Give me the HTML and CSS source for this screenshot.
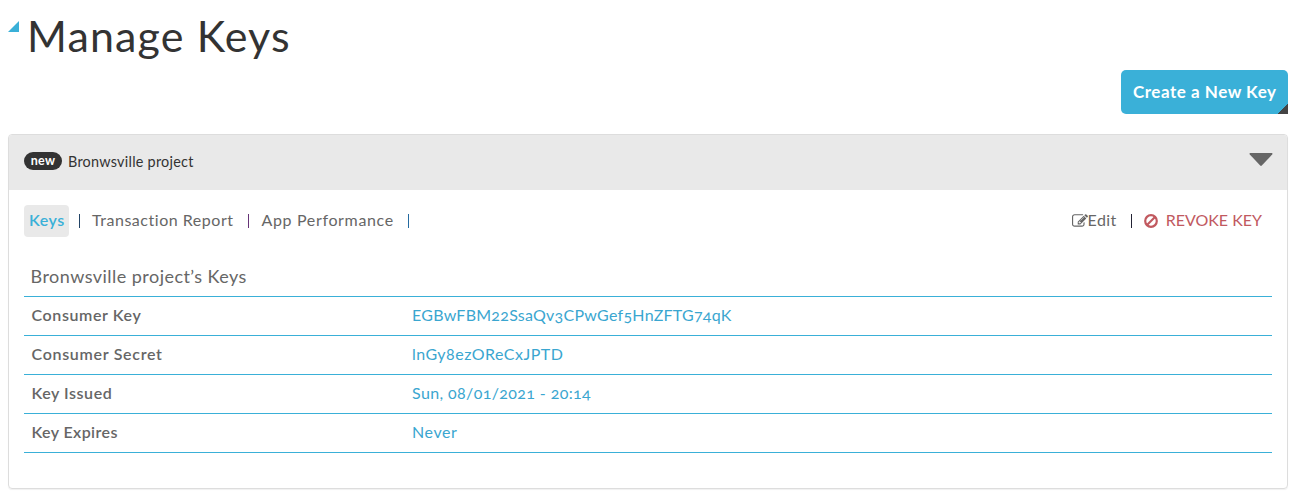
FILE: index.html
```html
<!DOCTYPE html>
<html lang="en">
<head>
<meta charset="utf-8">
<title>Manage Keys</title>
<link rel="stylesheet" href="styles.css">
</head>
<body>
<header class="page-head">
  <svg class="corner-mark" width="11" height="11" viewBox="0 0 11 11"><path d="M11 0V11H0Z"/></svg>
  <h1 class="page-title"><span>Manage Keys</span></h1>
</header>
<div class="actions">
  <a class="create"><span>Create a New Key</span></a>
</div>
<section class="panel">
  <div class="panel-head">
    <span class="badge">new</span>
    <span class="project">Bronwsville project</span>
    <svg class="caret" width="24" height="14" viewBox="0 0 24 14"><path d="M1.200 0H22.800Q24 .4 23.200 1.500L12.800 12.600Q12 13.400 11.200 12.600L.8 1.500Q0 .4 1.200 0Z"/></svg>
  </div>
  <div class="panel-body">
    <nav class="tabs">
      <a class="tab active">Keys</a><i class="sep sep-first"></i>
      <a class="tab report">Transaction Report</a><i class="sep sep-purple"></i>
      <a class="tab perf">App Performance</a><i class="sep sep-blue"></i>
      <span class="tools">
        <svg class="edit-icon" width="16" height="16" viewBox="0 0 1792 1792"><path d="M888 1184l116-116-152-152-116 116v56h96v96h56zm440-720q-16-16-33 1l-350 350q-17 17-1 33t33-1l350-350q17-17 1-33zm80 594v190q0 119-84.500 203.500t-203.500 84.500h-832q-119 0-203.500-84.500t-84.500-203.500v-832q0-119 84.500-203.500t203.500-84.500h832q63 0 117 25 15 7 18 23 3 17-9 29l-49 49q-14 14-32 8-23-6-45-6h-832q-66 0-113 47t-47 113v832q0 66 47 113t113 47h832q66 0 113-47t47-113v-126q0-13 9-22l64-64q15-15 35-7t20 29zm-96-738l288 288-672 672h-288v-288zm444 132l-92 92-288-288 92-92q28-28 68-28t68 28l152 152q28 28 28 68t-28 68z"/></svg>
        <a class="edit">Edit</a><i class="sep sep-dark"></i>
        <svg class="ban" width="14" height="14" viewBox="0 0 14 14"><circle cx="7" cy="7" r="5.8"/><path d="M3 11L11 3"/></svg>
        <a class="revoke">REVOKE KEY</a>
      </span>
    </nav>
    <h2 class="caption"><span>Bronwsville project’s Keys</span></h2>
    <dl class="keys">
      <div class="row"><dt class="l1">Consumer Key</dt><dd class="v1">EGBwFBM22SsaQv3CPwGef5HnZFTG74qK</dd></div>
      <div class="row"><dt class="l2">Consumer Secret</dt><dd class="v2">lnGy8ezOReCxJPTD</dd></div>
      <div class="row"><dt class="l3">Key Issued</dt><dd class="v3">Sun, 08/01/2021 - 20:14</dd></div>
      <div class="row"><dt class="l4">Key Expires</dt><dd class="v4">Never</dd></div>
    </dl>
  </div>
</section>
</body>
</html>
```
FILE: styles.css
```css
* { box-sizing: border-box; }
body { margin: 0; padding: 0 3px 0 8px; height: 493px; overflow: hidden; background: #fff; color: #666; font: 16px/24px Lato, "Open Sans", sans-serif; font-variant-numeric: oldstyle-nums; font-variant-ligatures: none; }
.page-head { display: flex; height: 70px; }
.corner-mark { margin-top: 21px; fill: #3ab0d8; }
.page-title { margin: 10px 0 0 8px; font-size: 43px; line-height: 52px; font-weight: 400; letter-spacing: 1.15px; color: #333; white-space: nowrap; }
.actions { display: flex; justify-content: flex-end; height: 64px; }
.create { display: flex; align-items: center; padding-left: 12px; width: 167px; height: 44px; border-radius: 5px 5px 0 5px; background: linear-gradient(135deg, transparent 50%, #444 50%) right bottom / 10px 10px no-repeat, #3ab0d8; color: #fff; font-weight: 700; font-size: 17px; letter-spacing: .52px; white-space: nowrap; }
.panel { width: 1280px; height: 355px; border: 1px solid #ddd; border-radius: 4px; box-shadow: 0 1px 1px rgba(0,0,0,.06); }
.panel-head { display: flex; align-items: center; height: 55px; padding: 0 15px; background: #e9e9e9; border-radius: 3px 3px 0 0; color: #333; }
.badge { width: 38px; height: 18px; margin-top: -4px; border-radius: 9px; background: #333; color: #fff; font-size: 12.5px; line-height: 17px; font-weight: 700; letter-spacing: .2px; text-align: center; }
.project { margin: -2px 0 0 6px; font-size: 14.4px; letter-spacing: .25px; }
.caret { margin: -5px -.5px 0 auto; fill: #666; }
.panel-body { padding: 15px; }
.tabs { display: flex; align-items: center; height: 32px; white-space: nowrap; }
.tab, .edit, .revoke { margin-top: -2px; }
.tabs .active { width: 45px; height: 32px; margin-top: 0; padding-left: 5px; line-height: 30px; border-radius: 4px; background: #e9e9e9; color: #3ab0d8; font-weight: 600; letter-spacing: .5px; }
.sep { width: 1px; height: 14px; margin-top: -1px; }
.sep-first { margin-left: 10px; background: #246; }
.sep-blue { margin-left: 14px; background: #246aa0; }
.sep-purple { margin-left: 14px; background: #637; }
.sep-dark { margin-left: 14px; background: #223; }
.report { margin-left: 12px; letter-spacing: .53px; }
.perf { margin-left: 13px; letter-spacing: .65px; }
.tools { display: flex; align-items: center; margin: 0 10px 0 auto; }
.edit-icon { margin-top: -1px; fill: #666; }
.edit { letter-spacing: .4px; }
.ban { margin: -1px 8px 0 12px; fill: none; stroke: #c1595f; stroke-width: 2.2; }
.revoke { color: #c1595f; }
.caption { margin: 26px 0 0 6.5px; height: 33px; font-size: 18px; line-height: 27px; font-weight: 400; letter-spacing: .46px; }
.keys { margin: 0; border-top: 1px solid #3ab0d8; }
.row { display: flex; height: 39px; padding: 6px 7.5px; border-bottom: 1px solid #3ab0d8; white-space: nowrap; }
.row dt { width: 380.5px; font-weight: 600; }
.row dd { margin: 0; color: #3aa6d0; }
.l1 { letter-spacing: .6px; }
.l2 { letter-spacing: .7px; }
.l3 { letter-spacing: .55px; }
.l4 { letter-spacing: .4px; }
.v1 { letter-spacing: .25px; }
.v2 { letter-spacing: .48px; }
.v3 { letter-spacing: .38px; }
.v4 { letter-spacing: .6px; }
```
